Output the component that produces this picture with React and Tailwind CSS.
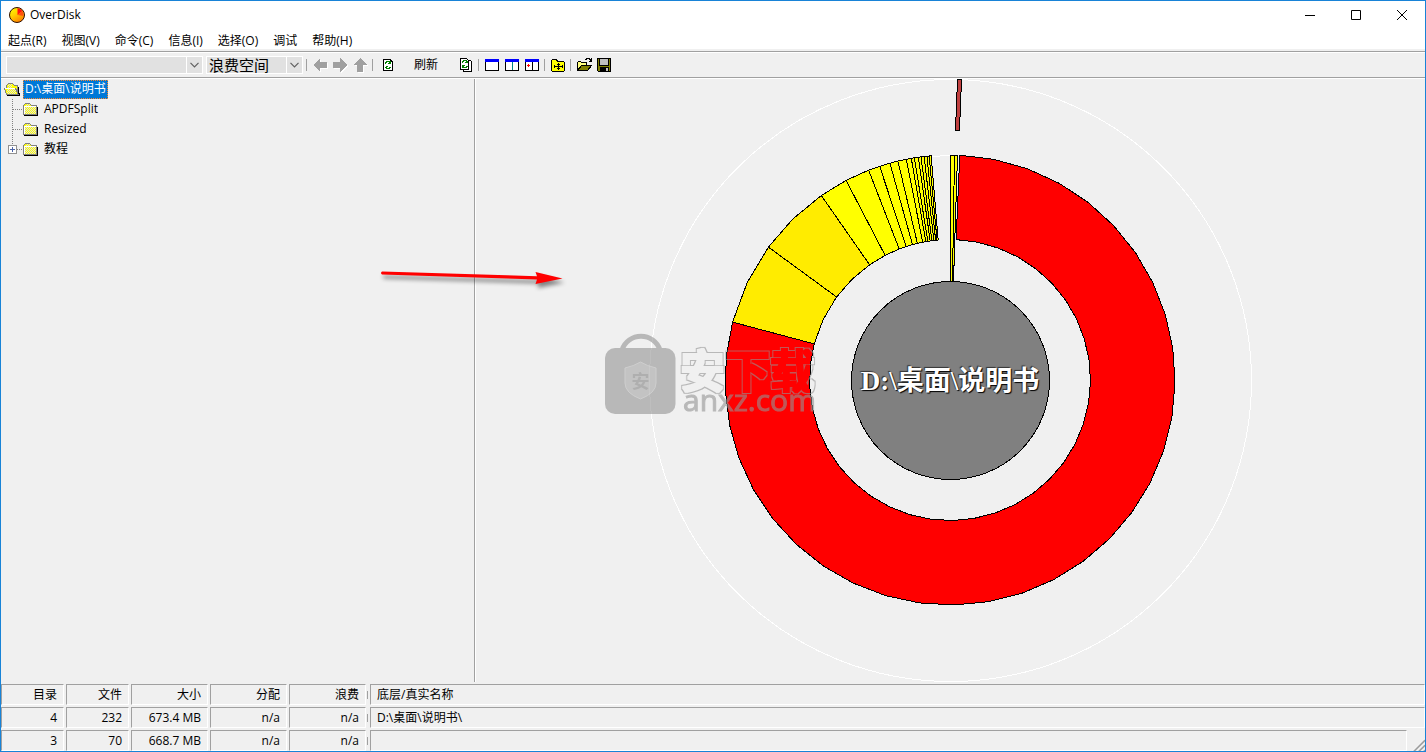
import React from "react";

const CX = 950;
const CY = 380;

const point = (radius, degrees) => {
  const a = (degrees * Math.PI) / 180;
  return `${(CX + radius * Math.sin(a)).toFixed(1)},${(CY - radius * Math.cos(a)).toFixed(1)}`;
};

// A ring segment made of straight chords of about nine degrees each.
const segment = (inner, outer, from, to) => {
  const steps = Math.max(1, Math.round((to - from) / 8.83));
  const angles = Array.from({ length: steps + 1 }, (_, i) => from + ((to - from) * i) / steps);
  return [
    ...angles.map((a) => point(outer, a)),
    ...angles.slice().reverse().map((a) => point(inner, a)),
  ].join(" ");
};

const YELLOW_EDGES = [-75.1, -53.8, -34.9, -27.5, -21.2, -18.2, -15.5, -13.4, -11.2, -9.9, -9.1, -8.1, -7.4, -6.6, -5.9, -5.3, -4.8];

function Chart() {
  return (
    <svg viewBox="476 79 949 603" className="min-h-0 min-w-0 flex-1" role="img" aria-label="D:\桌面\说明书">
      <g shapeRendering="crispEdges" stroke="#000" strokeWidth="1">
        <circle cx="950.5" cy="380.5" r="301" fill="none" stroke="#fff" />
        <path d="M930 156.500L951 155.500" stroke="#fff" />
        <polygon points={segment(140.5, 225, 2.5, 284.9)} fill="#f00" />
        {YELLOW_EDGES.slice(0, -1).map((edge, i) => (
          <polygon key={edge} points={segment(140.5, 225, edge, YELLOW_EDGES[i + 1])} fill={i < 2 ? "#ffec00" : "#ffff00"} />
        ))}
        <polygon points="950.5,155.5 954.5,155.5 952.5,281.5 950.5,281.5" fill="#ff0" />
        <polygon points="954.5,155.5 957.5,155.5 953.5,281.5 952.5,281.5" fill="#ff0" />
        <polygon points="957.5,79.5 961.5,79.5 959.5,130.5 955.5,130.5" fill="#c04040" />
        <circle cx="950.5" cy="380.5" r="99" fill="#808080" />
      </g>
      <text
        x="950"
        y="390"
        textAnchor="middle"
        className="fill-white font-['Liberation_Serif','Noto_Sans_CJK_SC',serif] text-[27px] font-bold [text-shadow:1px_1px_1px_#000,-1px_-1px_1px_#333]"
      >
        D:\桌面\说明书
      </text>
    </svg>
  );
}

function Watermark() {
  return (
    <svg width="216" height="90" viewBox="604 333 216 90" className="pointer-events-none absolute left-[603px] top-[254px] overflow-visible opacity-60">
      <filter id="outline" x="-5%" y="-5%" width="110%" height="110%">
        <feMorphology in="SourceAlpha" operator="dilate" radius="2" result="outer" />
        <feMorphology in="SourceAlpha" operator="dilate" radius="1" result="inner" />
        <feFlood floodColor="#949494" />
        <feComposite in2="outer" operator="in" />
        <feComposite in2="inner" operator="out" />
      </filter>
      <path d="M622 350a20 20 0 0 1 38 0" fill="none" stroke="#949494" strokeWidth="5" />
      <rect x="605" y="348" width="70.500" height="66" rx="10" fill="#949494" />
      <path d="M625 368q9-2 15.500-6q6.500 4 15.500 6v15q0 10-15.500 16q-15.500-6-15.500-16z" fill="#a6a6a6" stroke="#b8b8b8" />
      <text x="640.500" y="388" textAnchor="middle" className="fill-[#858585] font-['Noto_Sans_CJK_SC',sans-serif] text-[18px] font-bold">安</text>
      <text x="680" y="388" filter="url(#outline)" className="font-['Noto_Sans_CJK_SC',sans-serif] text-[45px] font-bold">安下载</text>
      <text x="683" y="411" className="fill-[#949494] stroke-[#949494] font-['Open_Sans',sans-serif] text-[30px]">anxz.com</text>
    </svg>
  );
}

function PointerArrow() {
  return (
    <svg width="190" height="28" viewBox="378 263 190 28" className="pointer-events-none absolute left-[377px] top-[184px] overflow-visible [filter:drop-shadow(2px_4px_2px_#0007)]">
      <path d="M382 271.500l155 4.800l-1.500-4.300l27 6.500l-27 5.500l1.500-4.500l-155-5q-2-1.500 0-3z" fill="#f00" />
    </svg>
  );
}

function Icon({ children, w = 16, h = 16 }) {
  return (
    <svg width={w} height={h} viewBox={`0 0 ${w} ${h}`} shapeRendering="crispEdges" aria-hidden="true" className="block shrink-0">
      {children}
    </svg>
  );
}

const BackIcon = () => (
  <Icon><path d="M1 8l7-7v4h7v6h-7v4z" fill="#fff" transform="translate(1 1)" /><path d="M1 8l7-7v4h7v6h-7v4z" fill="#a0a0a0" /></Icon>
);
const ForwardIcon = () => (
  <Icon><path d="M15 8l-7-7v4h-7v6h7v4z" fill="#fff" transform="translate(1 1)" /><path d="M15 8l-7-7v4h-7v6h7v4z" fill="#a0a0a0" /></Icon>
);
const UpIcon = () => (
  <Icon><path d="M8 1l7 7h-4v7h-6v-7h-4z" fill="#fff" transform="translate(1 1)" /><path d="M8 1l7 7h-4v7h-6v-7h-4z" fill="#a0a0a0" /></Icon>
);

const Recycle = () => (
  <>
    <path d="M5 6.500v-1h1v-1h3v1h1v1M5 9.500v1h1v1h3v-1h1v-1" fill="none" stroke="#008000" />
    <path d="M10 4v3h-3zM5 12v-3h3z" fill="#008000" />
  </>
);
const RefreshIcon = () => (
  <Icon><path d="M3.500 2.500h7l2 2v9h-9z" fill="#fff" stroke="#000" /><path d="M10.500 2.500v2h2" fill="none" stroke="#000" /><g transform="translate(.5 0)"><Recycle /></g></Icon>
);
const RefreshAllIcon = () => (
  <Icon>
    <path d="M5.500 3.500h7l1 1v10h-8z" fill="#fff" stroke="#000" />
    <path d="M2.500 1.500h6l2 2v9h-8z" fill="#fff" stroke="#000" />
    <g transform="translate(-1 -1)"><Recycle /></g>
  </Icon>
);
const PaneIcon = ({ split, mark }) => (
  <Icon>
    <rect x="1.500" y="2.500" width="13" height="11" fill="#fff" stroke="#000" />
    <rect x="1" y="2" width="14" height="3" fill="#00f" />
    {split && <path d="M8.500 5v8" stroke={mark ? "#000" : "#008080"} />}
    {mark && <path d="M3 8.500h3M4.500 7v3" stroke="#f00" />}
  </Icon>
);
const FolderAllIcon = () => (
  <Icon>
    <path d="M1.500 13.500v-10l1-1h4l1 2h6l1 1v8l-1 1h-11z" fill="#ff0" stroke="#000" />
    <path d="M4 9.500h9M8.500 6v7M4.500 8v3M12.500 8v3M7 7.500h3M7 11.500h3" fill="none" stroke="#000" />
  </Icon>
);
const OpenIcon = () => (
  <Icon w={17}>
    <path d="M1.500 13.500v-8l1-1h2l1 1h5v3h-5l-4 5" fill="#ffff80" stroke="#000" />
    <path d="M1.500 13.500l4-5h10l-4 5z" fill="#808000" stroke="#000" />
    <path d="M9 2.500h1v-1h3v1h1v1h1M15.500 1v3M13 4.500h3" fill="none" stroke="#000" />
  </Icon>
);
const SaveIcon = () => (
  <Icon>
    <path d="M1.500 1.500h13v13h-12l-1-1z" fill="#808000" stroke="#000" />
    <rect x="4" y="2" width="8" height="6" fill="#c0c0c0" />
    <path d="M3.500 2v6.500h9v-6.500" fill="none" stroke="#000" />
    <rect x="4" y="10" width="9" height="4" fill="#000" />
    <rect x="10" y="11" width="2" height="3" fill="#c0c0c0" />
  </Icon>
);

// Checkerboard over a yellow base, one pixel per square.
const Dither = ({ x, y, width, height }) =>
  Array.from({ length: height }, (_, row) =>
    Array.from({ length: width }, (_, col) =>
      (row + col) % 2 ? <rect key={`${row}-${col}`} x={x + col} y={y + row} width="1" height="1" fill="#e0e0e0" /> : null
    )
  );

const ClosedFolder = () => (
  <Icon>
    <path d="M2 14.500h13.500v-9" fill="none" stroke="#000" />
    <path d="M1.500 13.500v-9l2-2h4l2 2h5v9z" fill="#ff0" stroke="#808080" />
    <Dither x={4} y={3} width={4} height={2} />
    <Dither x={3} y={6} width={11} height={7} />
    <path d="M2.500 13v-7.500h11.500" fill="none" stroke="#fff" />
  </Icon>
);
const OpenFolder = () => (
  <Icon>
    <path d="M2.500 13.500v-9l2-2h4l2 2h3v9z" fill="#ff0" stroke="#808080" />
    <Dither x={4} y={3} width={4} height={4} />
    <path d="M2.500 13.500l-2-6h11l3 6z" fill="#ff0" stroke="#808080" />
    <Dither x={3} y={8} width={9} height={5} />
    <path d="M1 7.500h10" stroke="#fff" />
    <path d="M3 14.500h12.500v-2h-1v-7" fill="none" stroke="#000" />
  </Icon>
);

const ToolButton = ({ label, disabled, children }) => (
  <button type="button" aria-label={label} disabled={disabled} className="flex size-5 items-center justify-center">
    {children}
  </button>
);
const Separator = () => <span className="ml-0.5 mr-[3px] h-3 w-px bg-[#a0a0a0]" />;

function Combo({ label, className, children }) {
  return (
    <span className={`relative flex h-[18px] border border-white bg-[#e1e1e1] ${className}`}>
      <select aria-label={label} className="w-full appearance-none bg-transparent pl-[2px] text-[15px] leading-4 text-black outline-none">
        {children}
      </select>
      <span className="pointer-events-none absolute inset-y-0 right-0 flex w-4 items-center justify-center border-l border-white">
        <svg width="9" height="6" viewBox="0 0 9 6" aria-hidden="true">
          <path d="M.5 .8l4 4l4-4" fill="none" stroke="#606060" strokeWidth="1.2" />
        </svg>
      </span>
    </span>
  );
}

const MENU = ["起点(R)", "视图(V)", "命令(C)", "信息(I)", "选择(O)", "调试", "帮助(H)"];
const FOLDERS = [
  { name: "APDFSplit" },
  { name: "Resized" },
  { name: "教程", closed: true },
];

function Tree() {
  return (
    <nav aria-label="目录" className="w-[473px] shrink-0 pl-[3px]">
      <div className="flex h-5 items-center gap-[3px]">
        <OpenFolder />
        <a href="#root" className="flex h-[19px] items-center border border-dotted border-[#ff8728] bg-[#0078d7] px-px text-white">D:\桌面\说明书</a>
      </div>
      <ul>
        {FOLDERS.map(({ name, closed }, i) => (
          <li key={name} className="flex h-5 items-center pl-1">
            <svg width="14" height="20" viewBox="0 0 14 20" shapeRendering="crispEdges" aria-hidden="true">
              <path d={i === FOLDERS.length - 1 ? "M4.500 0v10" : "M4.500 0v20"} stroke="#808080" strokeDasharray="1 1" />
              <path d="M5 10.500h9" stroke="#808080" strokeDasharray="1 1" />
              {closed && (
                <>
                  <rect x=".5" y="6.500" width="8" height="8" fill="#fff" stroke="#919191" />
                  <path d="M2 10.500h5M4.500 8v5" stroke="#4b63a7" />
                </>
              )}
            </svg>
            <ClosedFolder />
            <a href={`#${name}`} className="ml-[6px]">{name}</a>
          </li>
        ))}
      </ul>
    </nav>
  );
}

const HEADERS = ["目录", "文件", "大小", "分配", "浪费"];
const ROWS = [
  { cells: ["4", "232", "673.4 MB", "n/a", "n/a"], name: "D:\\桌面\\说明书\\" },
  { cells: ["3", "70", "668.7 MB", "n/a", "n/a"], name: "" },
];
const CELL = "h-[21px] min-w-0 flex-1 border border-b-white border-l-[#a0a0a0] border-r-white border-t-[#a0a0a0] leading-[19px]";

function StatusCells({ cells, name, tag: Tag, grip }) {
  return (
    <tr>
      {cells.map((cell, i) => (
        <Tag key={i} className="pb-0.5 pr-0.5 font-normal">
          <div className="flex items-center">
            <div className={`${CELL} pr-[6px] text-right`}>{cell}</div>
            {i === 4 && <span className="ml-px h-2 w-px bg-[#a0a0a0]" />}
          </div>
        </Tag>
      ))}
      <Tag className="pb-0.5 font-normal">
        <div className="flex items-end">
          <div className={`${CELL} pl-[6px] text-left`}>{name}</div>
          {grip && (
            <svg width="18" height="16" viewBox="0 0 18 16" aria-hidden="true" className="-mb-px shrink-0">
              <path d="M5 17L18 4M10 17L18 9M15 17L18 14" stroke="#a0a0a0" strokeWidth="2" />
              <path d="M3.500 17L18 2.500M8.500 17L18 7.500M13.500 17L18 12.500" stroke="#fff" />
            </svg>
          )}
        </div>
      </Tag>
    </tr>
  );
}

function StatusTable() {
  return (
    <table className="-mb-0.5 w-full table-fixed border-collapse">
      <colgroup>
        <col className="w-[65px]" />
        <col className="w-[65px]" />
        <col className="w-[79px]" />
        <col className="w-[79px]" />
        <col className="w-[81px]" />
        <col />
      </colgroup>
      <thead>
        <StatusCells cells={HEADERS} name="底层/真实名称" tag="th" />
      </thead>
      <tbody>
        {ROWS.map((row, i) => (
          <StatusCells key={i} {...row} tag="td" grip={i === ROWS.length - 1} />
        ))}
      </tbody>
    </table>
  );
}

export default function App() {
  return (
    <div className="flex h-screen flex-col overflow-hidden border border-[#1883d7] bg-[#f0f0f0] font-['Open_Sans','Noto_Sans_CJK_SC',sans-serif] text-[12px] leading-4 text-black">
      <header className="bg-white">
        <div className="flex h-7 items-center pl-2">
          <svg width="16" height="16" viewBox="0 0 16 16" aria-hidden="true">
            <defs>
              <linearGradient id="disk" x1="0" y1="0" x2="0.6" y2="1">
                <stop offset="0" stopColor="#ffff00" />
                <stop offset="0.5" stopColor="#ffd000" />
                <stop offset="1" stopColor="#ff8000" />
              </linearGradient>
            </defs>
            <circle cx="8" cy="8" r="7.500" fill="url(#disk)" stroke="#301000" />
            <path d="M8.500 8V1A7 7 0 0 1 13.500 4z" fill="#ff1010" />
            <path d="M8.500 8l5-4A7 7 0 0 1 14.500 9z" fill="#ff5010" />
          </svg>
          <h1 className="ml-[5px] flex-1">OverDisk</h1>
          {[
            ["最小化", "M3 8.500h10"],
            ["最大化", "M3.500 3.500h9v9h-9z"],
            ["关闭", "M3 3l10 10M13 3L3 13"],
          ].map(([label, d]) => (
            <button key={label} type="button" aria-label={label} className="flex h-full w-[46px] items-center justify-center">
              <svg width="16" height="16" viewBox="0 0 16 16" aria-hidden="true"><path d={d} fill="none" stroke="#000" /></svg>
            </button>
          ))}
        </div>
        <nav aria-label="菜单" className="flex h-5 items-center gap-[15px] pl-[7px] pt-1">
          {MENU.map((item) => (
            <button key={item} type="button">{item}</button>
          ))}
        </nav>
      </header>

      <div className="border-b border-white pt-0.5">
        <div className="flex h-[27px] items-center border-b border-t border-[#a0a0a0] pl-[5px] shadow-[inset_0_1px_0_#fff]" role="toolbar" aria-label="工具栏">
          <Combo label="路径" className="w-[197px]"><option></option></Combo>
          <Combo label="显示方式" className="ml-[3px] mr-px w-[97px]"><option>浪费空间</option></Combo>
          <Separator />
          <ToolButton label="后退" disabled><BackIcon /></ToolButton>
          <ToolButton label="前进" disabled><ForwardIcon /></ToolButton>
          <ToolButton label="向上" disabled><UpIcon /></ToolButton>
          <Separator />
          <button type="button" className="flex items-center pl-1 pr-[18px]">
            <RefreshIcon />
            <span className="ml-[18px]">刷新</span>
          </button>
          <ToolButton label="全部刷新"><RefreshAllIcon /></ToolButton>
          <Separator />
          <ToolButton label="单窗格"><PaneIcon /></ToolButton>
          <ToolButton label="双窗格"><PaneIcon split /></ToolButton>
          <ToolButton label="标记窗格"><PaneIcon split mark /></ToolButton>
          <Separator />
          <ToolButton label="文件夹"><FolderAllIcon /></ToolButton>
          <Separator />
          <ToolButton label="打开"><OpenIcon /></ToolButton>
          <ToolButton label="保存"><SaveIcon /></ToolButton>
        </div>
      </div>

      <main className="relative flex min-h-0 flex-1 pb-0.5">
        <Tree />
        <div className="w-0.5 shrink-0 border-l border-r border-l-[#a0a0a0] border-r-white" />
        <Chart />
        <Watermark />
        <PointerArrow />
      </main>

      <StatusTable />
    </div>
  );
}
